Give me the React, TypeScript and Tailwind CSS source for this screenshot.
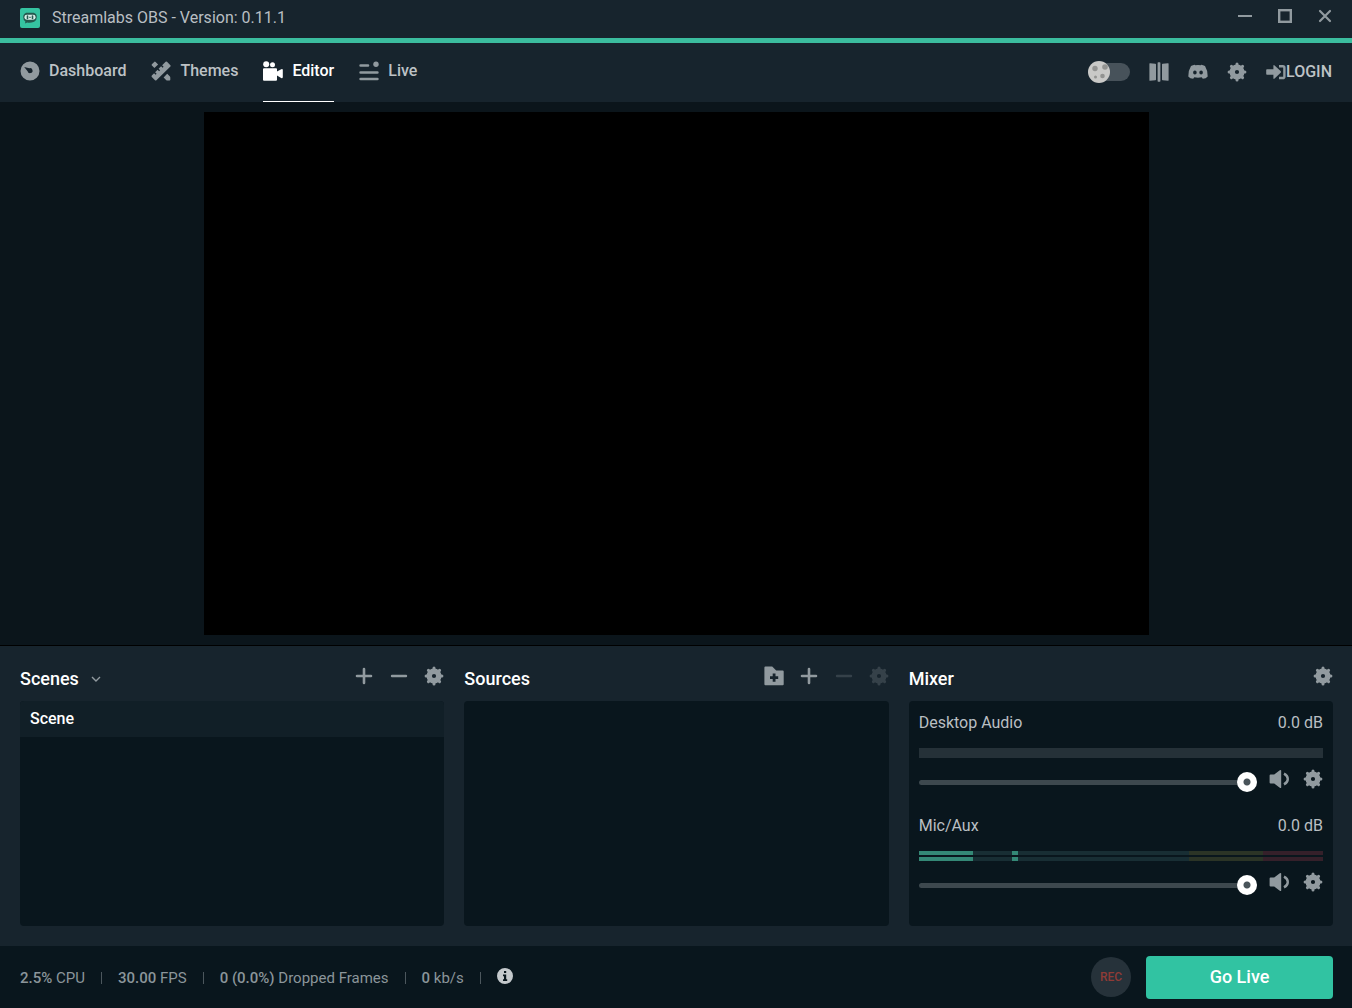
import type { ReactNode } from "react";

type IconProps = { className?: string };

const gearAngles = [0, 45, 90, 135];

function GearIcon({ className = "" }: IconProps) {
  return (
    <svg viewBox="0 0 20 20" className={`w-5 h-5 ${className}`} fill="none" stroke="currentColor">
      <circle cx="10" cy="10" r="4.8" strokeWidth="5.4" />
      {gearAngles.map((a) => (
        <path
          key={a}
          d="M10 4.6V2.1M10 15.4V17.9"
          strokeWidth="3"
          strokeLinecap="round"
          transform={`rotate(${a} 10 10)`}
        />
      ))}
    </svg>
  );
}

function PlusIcon() {
  return (
    <svg viewBox="0 0 20 20" className="w-5 h-5" stroke="currentColor" strokeWidth="2.6" strokeLinecap="round">
      <path d="M10 3v14M3 10h14" />
    </svg>
  );
}

function MinusIcon() {
  return (
    <svg viewBox="0 0 20 20" className="w-5 h-5" stroke="currentColor" strokeWidth="2.4" strokeLinecap="round">
      <path d="M3 10h14" />
    </svg>
  );
}

function FolderPlusIcon() {
  return (
    <svg viewBox="0 0 20 20" className="w-5 h-5" fill="currentColor">
      <path
        fillRule="evenodd"
        d="M1.4.6h6.8l4 4h6.5q1 0 1 1v12.6q0 1-1 1H1.4q-1 0-1-1V1.6q0-1 1-1zM8.7 7.6v2.7H6v2.8h2.7v2.7h2.8v-2.7h2.7v-2.8h-2.7V7.6z"
      />
    </svg>
  );
}

function SpeakerIcon() {
  return (
    <svg viewBox="0 0 20 20" className="w-5 h-5" fill="currentColor">
      <path d="M1.6 5.6h3.6l5.6-4.4q1.4-.8 1.4.6v16.4q0 1.4-1.4.6l-5.6-4.4H1.6q-1 0-1-1V6.6q0-1 1-1z" />
      <path d="M15 4.6q3.8 2 3.8 5.4T15 15.4" fill="none" stroke="currentColor" strokeWidth="2.4" />
    </svg>
  );
}

function DashboardIcon() {
  return (
    <svg viewBox="0 0 20 20" className="w-5 h-5" fill="currentColor">
      <path
        fillRule="evenodd"
        d="M10 .5a9.5 9.5 0 1 0 0 19a9.5 9.5 0 1 0 0-19zM4.2 6.1l5.1 1.2a2.5 2.5 0 1 1-1.7 2.9z"
      />
    </svg>
  );
}

function ThemesIcon() {
  return (
    <svg viewBox="0 0 20 20" className="w-5 h-5" fill="currentColor">
      <path d="M14.6.8q.7-.6 1.4 0l3.4 3.4q.6.7 0 1.4L5.400 19.200q-.7.6-1.400 0L.8 16q-.6-.7 0-1.400l2.300-2.300 1.500 1.500 1-1-1.500-1.500 2.500-2.500 1.500 1.500 1-1-1.500-1.500 2.500-2.500 1.500 1.500 1-1-1.500-1.500z" />
      <path d="M.9 3.200L3.200.9q.7-.7 1.400 0l2.500 2.500-3.700 3.700L.9 4.600q-.7-.7 0-1.400z" />
      <path d="M16.200 12.800l2.500 2.500q.5.6.6 1.200v2.200q0 .8-.8.8h-2.200q-.6 0-1.200-.6l-2.500-2.500z" />
    </svg>
  );
}

function EditorIcon() {
  return (
    <svg viewBox="0 0 20 20" className="w-5 h-5" fill="currentColor">
      <circle cx="3.2" cy="3.2" r="3" />
      <circle cx="9.5" cy="3.8" r="2.5" />
      <path d="M1 7.2h12q1 0 1 1v2.4l4.2-2.3q1.6-.7 1.6.8v7q0 1.6-1.6.8L14 14.6v4.2q0 1-1 1H1q-1 0-1-1V8.2q0-1 1-1z" />
    </svg>
  );
}

function LiveIcon() {
  return (
    <svg viewBox="0 0 20 20" className="w-5 h-5" stroke="currentColor" strokeWidth="2.6" strokeLinecap="round">
      <path d="M1.6 4.500h7.400M1.600 11.500h16.800M1.600 18h16.800" />
      <circle cx="17" cy="3.200" r="2.700" fill="currentColor" stroke="none" />
    </svg>
  );
}

function StudioIcon() {
  return (
    <svg viewBox="0 0 20 20" className="w-5 h-5" fill="currentColor">
      <path d="M.4 1.700q0-.6.6-.5l5.400.6q.6 0 .6.700v15q0 .7-.6.700l-5.400.6q-.6 0-.6-.5zM8.600.9q0-.6.600-.6h1.600q.6 0 .6.600v18.200q0 .6-.6.600H9.200q-.6 0-.6-.6zM19.600 1.700q0-.6-.6-.5l-5.400.6q-.6 0-.6.700v15q0 .7.600.7l5.400.6q.6 0 .6-.5z" />
    </svg>
  );
}

function DiscordIcon() {
  return (
    <svg viewBox="0 0 20 20" className="w-5 h-5" fill="currentColor">
      <path
        fillRule="evenodd"
        d="M7.2 3.2L6.9 2.7Q4.8 3 3 4 .3 8.2.3 14.4q1.700 2.300 4.900 2.400l1.100-1.500q3.700.8 7.400 0l1.100 1.500q3.200-.1 4.900-2.400Q19.700 8.200 17 4q-1.800-1-3.900-1.300l-.3.500q-2.800-.4-5.600 0zM6.900 8.500a1.800 2 0 1 0 0 4a1.800 2 0 1 0 0-4zM13.100 8.500a1.800 2 0 1 0 0 4a1.800 2 0 1 0 0-4z"
      />
    </svg>
  );
}

function LoginIcon() {
  return (
    <svg viewBox="0 0 20 20" className="w-5 h-5" fill="currentColor">
      <path d="M1 7.200h6.400V4q0-1.600 1.200-.6l6 5.700q.8.800 0 1.600l-6 5.800q-1.200 1-1.200-.6v-3.200H1q-.8 0-.8-.8V8q0-.8.8-.8z" />
      <path d="M13 4.200h3.800q1.600 0 1.600 1.600v8.600q0 1.600-1.600 1.600H13" fill="none" stroke="currentColor" strokeWidth="2.400" />
    </svg>
  );
}

function Logo() {
  return (
    <svg viewBox="0 0 20 20" className="w-5 h-5">
      <rect width="20" height="20" rx="2" fill="#35c3a1" />
      <path d="M6.200 4.800h7.600q3 1 3 4.200t-2.600 4.800q-4.200 1.300-7 .6l-2.200 1 .4-2Q3.200 12 3.200 9t3-4.200z" fill="#24594f" />
      <rect x="4.400" y="6.700" width="11.200" height="5" rx="2.400" fill="#d9eee9" />
      <path d="M7.500 8v2.400M12.500 8v2.400" stroke="#24594f" strokeWidth="1.600" strokeLinecap="round" />
      <path d="M9 9.300h2" stroke="#24594f" strokeWidth=".8" />
    </svg>
  );
}

function InfoIcon() {
  return (
    <svg viewBox="0 0 16 16" className="w-4 h-4" fill="currentColor">
      <path
        fillRule="evenodd"
        d="M8 0a8 8 0 1 0 0 16a8 8 0 1 0 0-16zM7 3h2.200v2H7zM6 6.500h3.200v4.700h1V13H6v-1.800h1V8.200H6z"
      />
    </svg>
  );
}

const navItems = [
  { label: "Dashboard", icon: DashboardIcon, active: false },
  { label: "Themes", icon: ThemesIcon, active: false },
  { label: "Editor", icon: EditorIcon, active: true },
  { label: "Live", icon: LiveIcon, active: false },
];

const stats = [
  { value: "2.5%", label: "CPU" },
  { value: "30.00", label: "FPS" },
  { value: "0 (0.0%)", label: "Dropped Frames" },
  { value: "0", label: "kb/s" },
];

// relative widths of the volume meter segments
const meterSegments = [
  { size: 54, color: "bg-[#348876]" },
  { size: 39, color: "bg-[#182e34]" },
  { size: 6, color: "bg-[#348876]" },
  { size: 170, color: "bg-[#182e34]" },
  { size: 74, color: "bg-[#2b3426]" },
  { size: 60, color: "bg-[#35202a]" },
];

const channels = [
  { id: "desktop", name: "Desktop Audio", db: "0.0 dB", live: false },
  { id: "mic", name: "Mic/Aux", db: "0.0 dB", live: true },
];

function IconButton({ label, disabled, children }: { label: string; disabled?: boolean; children: ReactNode }) {
  return (
    <button type="button" aria-label={label} disabled={disabled} className="block text-[#919a9f] disabled:opacity-25">
      {children}
    </button>
  );
}

function TitleBar() {
  return (
    <header className="flex items-center justify-between h-[43px] px-5 pb-[2px] bg-[#17242d] border-b-[5px] border-[#3bbd9e]">
      <div className="flex items-center gap-3">
        <Logo />
        <h1 className="text-base leading-5 text-[#b9bfc3]">Streamlabs OBS - Version: 0.11.1</h1>
      </div>
      <div className="flex items-center gap-[26px] pb-1 text-[#919a9f]">
        <button type="button" aria-label="Minimize">
          <svg viewBox="0 0 14 14" className="w-[14px] h-[14px]" stroke="currentColor" strokeWidth="2">
            <path d="M0 7h14" />
          </svg>
        </button>
        <button type="button" aria-label="Maximize">
          <svg viewBox="0 0 14 14" className="w-[14px] h-[14px]" fill="none" stroke="currentColor" strokeWidth="2.4">
            <rect x="1.200" y="1.200" width="11.600" height="11.600" />
          </svg>
        </button>
        <button type="button" aria-label="Close">
          <svg viewBox="0 0 14 14" className="w-[14px] h-[14px]" stroke="currentColor" strokeWidth="2.200" strokeLinecap="round">
            <path d="M2 2l10 10M12 2L2 12" />
          </svg>
        </button>
      </div>
    </header>
  );
}

function NavBar() {
  return (
    <div className="flex justify-between h-[59px] px-5 bg-[#17242d]">
      <nav className="flex gap-[25px]">
        {navItems.map(({ label, icon: Icon, active }) => (
          <a
            key={label}
            href="#"
            className={`flex items-center gap-[9px] pb-[3px] border-b text-base font-medium ${
              active ? "border-white text-white" : "border-transparent text-[#bdc2c5]"
            }`}
          >
            <span className={active ? "text-white" : "text-[#919a9f]"}>
              <Icon />
            </span>
            {label}
          </a>
        ))}
      </nav>
      <div className="flex items-center gap-[19px] pb-[2px]">
        <label className="flex cursor-pointer">
          <input type="checkbox" aria-label="Night mode" defaultChecked className="sr-only" />
          <svg viewBox="0 0 42 22" className="w-[42px] h-[22px]">
            <rect x="4" y="2" width="38" height="18" rx="9" fill="#47525a" />
            <circle cx="11" cy="11" r="11" fill="#c9c9c7" />
            <circle cx="7" cy="7.500" r="2.700" fill="#929391" />
            <circle cx="17" cy="6" r="2.800" fill="#929391" />
            <circle cx="14.500" cy="15" r="2.300" fill="#929391" />
            <circle cx="7.500" cy="16" r="1.500" fill="#929391" />
          </svg>
        </label>
        <IconButton label="Studio mode">
          <StudioIcon />
        </IconButton>
        <IconButton label="Discord">
          <DiscordIcon />
        </IconButton>
        <IconButton label="Settings">
          <GearIcon />
        </IconButton>
        <button type="button" className="flex items-center text-base font-medium text-[#bdc2c5]">
          <span className="text-[#919a9f]">
            <LoginIcon />
          </span>
          LOGIN
        </button>
      </div>
    </div>
  );
}

function Panel({ title, chevron, actions, children }: { title: string; chevron?: boolean; actions: ReactNode; children?: ReactNode }) {
  return (
    <section className="flex flex-col">
      <div className="flex items-center justify-between h-[55px] pt-[10px]">
        <div className="flex items-center gap-[11px] text-white">
          <h2 className="text-lg font-medium">{title}</h2>
          {chevron && (
            <button type="button" aria-label="Scene collections">
              <svg viewBox="0 0 12 12" className="w-3 h-3" fill="none" stroke="#919a9f" strokeWidth="1.400">
                <path d="M2 4l4 4 4-4" />
              </svg>
            </button>
          )}
        </div>
        <div className="flex items-center gap-[15px] pb-[6px]">{actions}</div>
      </div>
      <div className="h-[225px] rounded overflow-hidden bg-[#09161d]">{children}</div>
    </section>
  );
}

function MixerChannel({ id, name, db, live }: (typeof channels)[number]) {
  return (
    <div className="h-[103px] px-[10px] pt-[10px]">
      <div className="flex justify-between text-base leading-6 text-[#b9bfc3]">
        <label htmlFor={id}>{name}</label>
        <span>{db}</span>
      </div>
      {live ? (
        <div className="flex flex-col gap-[2px] mt-[13px]">
          {[0, 1].map((bar) => (
            <div key={bar} className="flex h-1">
              {meterSegments.map((s, i) => (
                <div key={i} className={s.color} style={{ flexGrow: s.size }} />
              ))}
            </div>
          ))}
        </div>
      ) : (
        <div className="h-[10px] mt-[13px] bg-[#253138]" />
      )}
      <div className="flex items-center gap-3 mt-[11px]">
        <input
          id={id}
          type="range"
          min="0"
          max="100"
          defaultValue="100"
          className="flex-1 min-w-0 h-5 appearance-none bg-transparent [&::-webkit-slider-runnable-track]:h-[5px] [&::-webkit-slider-runnable-track]:rounded-sm [&::-webkit-slider-runnable-track]:bg-[#3d484e] [&::-webkit-slider-thumb]:appearance-none [&::-webkit-slider-thumb]:w-5 [&::-webkit-slider-thumb]:h-5 [&::-webkit-slider-thumb]:-mt-2 [&::-webkit-slider-thumb]:rounded-full [&::-webkit-slider-thumb]:bg-[radial-gradient(circle,#49545a_3px,#fff_4px)]"
        />
        <div className="flex gap-[14px] pb-[6px]">
          <IconButton label={`Mute ${name}`}>
            <SpeakerIcon />
          </IconButton>
          <IconButton label={`${name} settings`}>
            <GearIcon />
          </IconButton>
        </div>
      </div>
    </div>
  );
}

function Footer() {
  return (
    <footer className="flex items-center justify-between h-[62px] pl-5 pr-[19px] bg-[#09161d]">
      <div className="flex items-center gap-4 pt-[2px] text-[15px] text-[#8b959a]">
        {stats.map((s) => (
          <div key={s.label} className="flex items-center gap-4">
            <span>
              <span className="font-medium">{s.value}</span> {s.label}
            </span>
            <span className="w-px h-3 bg-[#4c575d]" />
          </div>
        ))}
        <button type="button" aria-label="Performance info" className="pb-1 text-[#c4c9cc]">
          <InfoIcon />
        </button>
      </div>
      <div className="flex items-center gap-[15px]">
        <button type="button" className="w-10 h-10 rounded-full bg-[#26323a] text-xs font-medium text-[#8f3b36]">
          REC
        </button>
        <button type="button" className="w-[187px] h-[43px] rounded bg-[#31c3a2] text-lg font-medium text-white">
          Go Live
        </button>
      </div>
    </footer>
  );
}

export default function App() {
  return (
    <div className="flex flex-col h-screen bg-[#0b151b] font-['Roboto',sans-serif]">
      <TitleBar />
      <NavBar />

      {/* Preview */}
      <main className="flex flex-1 min-h-0 justify-center p-[10px] border-b border-black">
        <div className="h-full aspect-[945/523] bg-black" />
      </main>

      {/* Studio controls */}
      <div className="grid grid-cols-3 gap-5 pl-5 pr-[19px] pb-5 bg-[#17242d]">
        <Panel
          title="Scenes"
          chevron
          actions={
            <>
              <IconButton label="Add scene">
                <PlusIcon />
              </IconButton>
              <IconButton label="Remove scene">
                <MinusIcon />
              </IconButton>
              <IconButton label="Scene transitions">
                <GearIcon />
              </IconButton>
            </>
          }
        >
          <ul>
            <li className="flex items-center h-9 px-[10px] bg-[#111f27] text-base font-medium text-white">Scene</li>
          </ul>
        </Panel>
        <Panel
          title="Sources"
          actions={
            <>
              <IconButton label="Add folder">
                <FolderPlusIcon />
              </IconButton>
              <IconButton label="Add source">
                <PlusIcon />
              </IconButton>
              <IconButton label="Remove source" disabled>
                <MinusIcon />
              </IconButton>
              <IconButton label="Source properties" disabled>
                <GearIcon />
              </IconButton>
            </>
          }
        />
        <Panel
          title="Mixer"
          actions={
            <IconButton label="Mixer settings">
              <GearIcon />
            </IconButton>
          }
        >
          {channels.map((c) => (
            <MixerChannel key={c.id} {...c} />
          ))}
        </Panel>
      </div>

      <Footer />
    </div>
  );
}
